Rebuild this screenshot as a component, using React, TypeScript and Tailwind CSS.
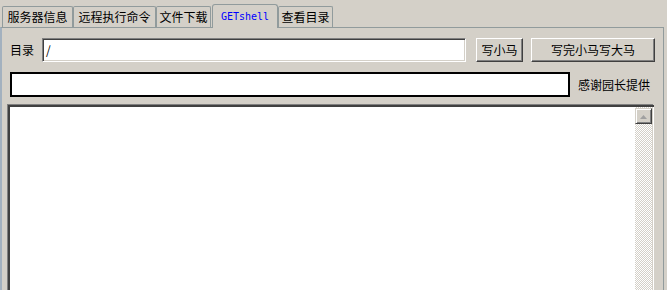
const cjk = "font-['SimSun','Noto_Sans_CJK_SC',sans-serif]";

const tabs = [
  { label: "服务器信息", w: "w-[71px]" },
  { label: "远程执行命令", w: "w-[83px]" },
  { label: "文件下载", w: "w-[55px]" },
];

function RaisedButton({ label, w }: { label: string; w: string }) {
  return (
    <button
      className={`${w} h-[24px] flex items-center justify-center bg-[#d4d0c8] border border-t-white border-l-white border-r-[#404040] border-b-[#404040] shadow-[inset_-1px_-1px_#808080] text-[12px] text-black ${cjk}`}
    >
      {label}
    </button>
  );
}

export default function App() {
  return (
    <div className={`w-[667px] h-[290px] bg-[#d4d0c8] overflow-hidden ${cjk} text-[12px] text-black`}>
      {/* tab strip */}
      <div className="flex items-end h-[27px] pl-[2px]">
        {tabs.map((t) => (
          <div
            key={t.label}
            className={`${t.w} h-[21px] flex items-center justify-center border border-b-0 border-[#919b9c] rounded-t-[2px] bg-[#d4d0c8]`}
          >
            {t.label}
          </div>
        ))}
        <div className="w-[66px] h-[24px] -mb-[1px] ml-[1px] z-10 flex items-center justify-center border border-b-0 border-[#919b9c] rounded-t-[3px] bg-[#d4d0c8] text-[#0000ff] font-['DejaVu_Sans_Mono',monospace] text-[10px]">
          GETshell
        </div>
        <div className="w-[55px] h-[21px] flex items-center justify-center border border-b-0 border-[#919b9c] rounded-t-[2px] bg-[#d4d0c8]">
          查看目录
        </div>
      </div>

      {/* panel */}
      <div className="w-[664px] h-[270px] border border-[#919b9c] border-l-2 border-l-[#a3b1bf] pt-[10px]">
        <div className="flex items-center h-[24px]">
          <span className="ml-[8px] w-[24px]">目录</span>
          <div className="ml-[8px] w-[424px] h-[24px] bg-white border border-t-[#808080] border-l-[#808080] border-r-white border-b-white shadow-[inset_1px_1px_#404040,inset_-1px_-1px_#d4d0c8] flex items-center pl-[3px]">
            /
          </div>
          <div className="ml-[10px]">
            <RaisedButton label="写小马" w="w-[47px]" />
          </div>
          <div className="ml-[8px]">
            <RaisedButton label="写完小马写大马" w="w-[124px]" />
          </div>
        </div>

        <div className="flex items-center mt-[10px] h-[25px]">
          <div className="ml-[8px] w-[560px] h-[25px] bg-white border-2 border-black" />
          <span className="ml-[8px]">感谢园长提供</span>
        </div>

        <div className="flex mt-[8px] ml-[6px] w-[646px] h-[200px] border-t-2 border-l-2 border-t-[#404040] border-l-[#404040] shadow-[-1px_-1px_#808080]">
          <div className="flex-1 bg-white" />
          <div className="w-[17px] mr-[1px] flex flex-col bg-[repeating-conic-gradient(#d4d0c8_0_25%,#ffffff_0_50%)] bg-[length:2px_2px]">
            <div className="w-[17px] h-[16px] mt-[1px] bg-[#d4d0c8] border border-t-[#d4d0c8] border-l-[#d4d0c8] border-r-[#404040] border-b-[#404040] shadow-[inset_1px_1px_#ffffff,inset_-1px_-1px_#808080] flex items-center justify-center">
              <svg width="9" height="5" viewBox="0 0 9 5">
                <path d="M1 5 L4.5 1 L8 5 Z" fill="#a0a0a0" />
              </svg>
            </div>
          </div>
          <div className="w-[1px] bg-white" />
        </div>
      </div>
    </div>
  );
}
